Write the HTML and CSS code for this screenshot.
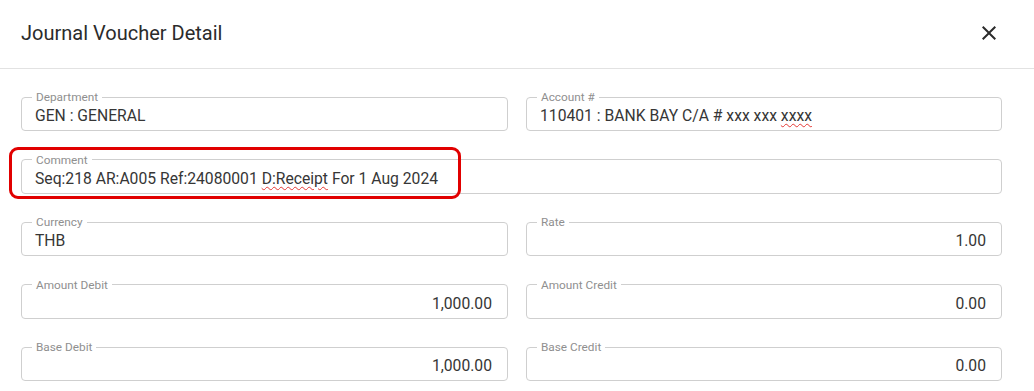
FILE: index.html
```html
<!DOCTYPE html>
<html lang="en">
<head>
<meta charset="utf-8">
<title>Journal Voucher Detail</title>
<link rel="stylesheet" href="styles.css">
</head>
<body>
<div class="dialog">
  <header class="dialog-header">
    <h1 class="dialog-title">Journal Voucher Detail</h1>
    <button class="close-btn" type="button" aria-label="Close">
      <svg viewBox="0 0 24 24" width="24" height="24"><path d="M19 6.41L17.59 5 12 10.59 6.41 5 5 6.41 10.59 12 5 17.59 6.41 19 12 13.41 17.59 19 19 17.59 13.41 12z"/></svg>
    </button>
  </header>
  <div class="dialog-body">
    <div class="form-grid">
      <fieldset class="field">
        <legend class="field-label">Department</legend>
        <div class="field-value">GEN : GENERAL</div>
      </fieldset>
      <fieldset class="field">
        <legend class="field-label">Account #</legend>
        <div class="field-value">110401 : BANK BAY C/A # xxx xxx <span class="misspelt">xxxx</span></div>
      </fieldset>
      <div class="field-wide">
        <fieldset class="field">
          <legend class="field-label">Comment</legend>
          <div class="field-value">Seq:218 AR:A005 Ref:24080001 <span class="misspelt">D:Receipt</span> For 1 Aug 2024</div>
        </fieldset>
        <div class="highlight"></div>
      </div>
      <fieldset class="field">
        <legend class="field-label">Currency</legend>
        <div class="field-value">THB</div>
      </fieldset>
      <fieldset class="field">
        <legend class="field-label">Rate</legend>
        <div class="field-value num">1.00</div>
      </fieldset>
      <fieldset class="field">
        <legend class="field-label">Amount Debit</legend>
        <div class="field-value num">1,000.00</div>
      </fieldset>
      <fieldset class="field">
        <legend class="field-label">Amount Credit</legend>
        <div class="field-value num">0.00</div>
      </fieldset>
      <fieldset class="field">
        <legend class="field-label">Base Debit</legend>
        <div class="field-value num">1,000.00</div>
      </fieldset>
      <fieldset class="field">
        <legend class="field-label">Base Credit</legend>
        <div class="field-value num">0.00</div>
      </fieldset>
    </div>
  </div>
</div>
</body>
</html>
```
FILE: styles.css
```css
* { box-sizing: border-box; }

html, body {
  margin: 0;
  padding: 0;
  background: #ffffff;
  font-family: Roboto, "Liberation Sans", Arial, sans-serif;
  color: #333333;
  overflow: hidden;
}

.dialog {
  width: 1034px;
}

.dialog-header {
  height: 69px;
  display: flex;
  align-items: center;
  justify-content: space-between;
  padding: 0 33px 3px 21px;
  border-bottom: 1px solid #e2e2e2;
}

.dialog-title {
  margin: 0;
  font-size: 20px;
  font-weight: 400;
  color: #2b2b2b;
  letter-spacing: 0;
}

.close-btn {
  width: 24px;
  height: 24px;
  padding: 0;
  margin: 0;
  border: 0;
  background: transparent;
  display: flex;
  align-items: center;
  justify-content: center;
  cursor: pointer;
}

.close-btn svg {
  display: block;
  fill: #2b2b2b;
}

.dialog-body {
  padding: 22px 32px 0 21px;
}

.form-grid {
  display: grid;
  grid-template-columns: 487px 1fr;
  column-gap: 18px;
  row-gap: 22.5px;
}

.field-wide {
  grid-column: 1 / -1;
  position: relative;
}

.field {
  margin: 0;
  min-width: 0;
  padding: 3px 15px 4px 13px;
  border: 1px solid #cfcfcf;
  border-radius: 4px;
}

.field-label {
  font-size: 11.8px;
  line-height: 12px;
  color: #8f8f8f;
  padding: 0 4px;
  margin-left: -3px;
}

.field-value {
  font-size: 15.7px;
  line-height: 20px;
  color: #363636;
  white-space: nowrap;
}

.field-value.num {
  text-align: right;
}

.misspelt {
  text-decoration: underline wavy #e53935;
  text-decoration-thickness: 1px;
  text-underline-offset: 2px;
}

.highlight {
  position: absolute;
  left: -12px;
  top: -7px;
  width: 452px;
  height: 52px;
  border: 3px solid #e10000;
  border-radius: 9px;
  pointer-events: none;
}
```
